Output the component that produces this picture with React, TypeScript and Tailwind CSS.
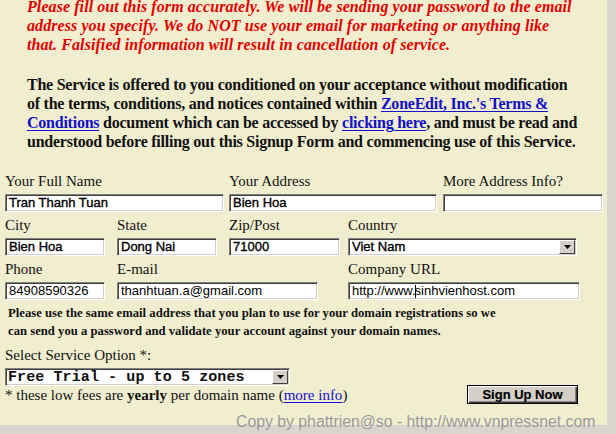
import React from "react";

// classic sunken field border (win9x style)
const sunken =
  "border border-t-[#808080] border-l-[#808080] border-b-white border-r-white shadow-[inset_1px_1px_0_#404040,inset_-1px_-1px_0_#d4d0c8] bg-white";

const serif = "font-['Liberation_Serif','Times_New_Roman',serif]";
const sans = "font-['Liberation_Sans',Arial,sans-serif]";

interface FieldProps {
  w: string;
  value?: string;
  heavy?: boolean;
  caretAt?: number;
}

const Field = ({ w, value = "", heavy, caretAt }: FieldProps) => {
  const text =
    caretAt !== undefined ? (
      <>
        {value.slice(0, caretAt)}
        <span className="inline-block w-px h-[13px] bg-black align-middle -mx-px" />
        {value.slice(caretAt)}
      </>
    ) : (
      value
    );
  return (
    <div
      className={`${w} h-[18px] ${sunken} ${sans} text-[13px] leading-[16px] text-black pl-[3px] whitespace-nowrap overflow-hidden ${
        heavy ? "[-webkit-text-stroke:0.35px_black]" : ""
      }`}
    >
      {text}
    </div>
  );
};

const DropArrow = () => (
  <div className="w-[16px] h-[14px] mt-px mr-px bg-[#d4d0c8] border border-t-white border-l-white border-b-[#404040] border-r-[#404040] flex items-center justify-center">
    <svg width="7" height="4" viewBox="0 0 7 4">
      <path d="M0 0h7L3.5 4z" fill="#000" />
    </svg>
  </div>
);

interface SelectProps {
  w: string;
  value: string;
  mono?: boolean;
}

const Select = ({ w, value, mono }: SelectProps) => (
  <div className={`${w} h-[18px] ${sunken} flex items-start justify-between`}>
    <span
      className={
        mono
          ? "font-['Liberation_Mono','Courier_New',monospace] font-bold text-[15px] leading-[17px] tracking-[0.1px] pl-[2px] whitespace-pre text-[#111]"
          : `${sans} text-[13px] leading-[16px] pl-[3px] [-webkit-text-stroke:0.35px_black]`
      }
    >
      {value}
    </span>
    <DropArrow />
  </div>
);

const Label = ({ children }: { children: React.ReactNode }) => (
  <div className={`${serif} text-[15px] leading-[19px] text-[#111] mb-[3px] whitespace-nowrap`}>{children}</div>
);

const Link = ({ children }: { children: React.ReactNode }) => (
  <span className="text-[#1010c8] underline underline-offset-2">{children}</span>
);

export default function App() {
  return (
    <div className="relative w-[616px] h-[434px] bg-[#d8d5cf] overflow-hidden">
      <div className="w-[607px] h-[428px] bg-[#f0eecf]">
        {/* warning */}
        <p
          className={`${serif} pl-[27px] -mt-[3px] text-[16px] leading-[19px] tracking-[0.08px] font-bold italic text-[#e40000] whitespace-nowrap`}
        >
          Please fill out this form accurately. We will be sending your password to the email
          <br />
          address you specify. We do NOT use your email for marketing or anything like
          <br />
          that. Falsified information will result in cancellation of service.
        </p>

        {/* terms */}
        <p
          className={`${serif} pl-[27px] mt-[21px] text-[16px] leading-[19px] tracking-[-0.24px] font-bold text-[#111] whitespace-nowrap`}
        >
          The Service is offered to you conditioned on your acceptance without modification
          <br />
          of the terms, conditions, and notices contained within <Link>ZoneEdit, Inc.'s Terms &amp;</Link>
          <br />
          <Link>Conditions</Link> document which can be accessed by <Link>clicking here</Link>, and must be read and
          <br />
          understood before filling out this Signup Form and commencing use of this Service.
        </p>

        {/* form */}
        <div className="pl-[5px] mt-[21px]">
          <div className="flex">
            <div className="w-[224px]">
              <Label>Your Full Name</Label>
              <Field w="w-[219px]" value="Tran Thanh Tuan" heavy />
            </div>
            <div className="w-[214px]">
              <Label>Your Address</Label>
              <Field w="w-[208px]" value="Bien Hoa" heavy />
            </div>
            <div>
              <Label>More Address Info?</Label>
              <Field w="w-[160px]" />
            </div>
          </div>

          <div className="flex mt-[4px]">
            <div className="w-[112px]">
              <Label>City</Label>
              <Field w="w-[100px]" value="Bien Hoa" heavy />
            </div>
            <div className="w-[112px]">
              <Label>State</Label>
              <Field w="w-[100px]" value="Dong Nai" heavy />
            </div>
            <div className="w-[119px]">
              <Label>Zip/Post</Label>
              <Field w="w-[111px]" value="71000" heavy />
            </div>
            <div>
              <Label>Country</Label>
              <Select w="w-[229px]" value="Viet Nam" />
            </div>
          </div>

          <div className="flex mt-[4px]">
            <div className="w-[112px]">
              <Label>Phone</Label>
              <Field w="w-[100px]" value="84908590326" />
            </div>
            <div className="w-[231px]">
              <Label>E-mail</Label>
              <Field w="w-[201px]" value="thanhtuan.a@gmail.com" />
            </div>
            <div>
              <Label>Company URL</Label>
              <Field w="w-[232px]" value="http://www.sinhvienhost.com" caretAt={11} />
            </div>
          </div>

          <p className={`${serif} pl-[3px] mt-[4px] text-[12.7px] leading-[18px] font-bold text-[#111] whitespace-nowrap`}>
            Please use the same email address that you plan to use for your domain registrations so we
            <br />
            can send you a password and validate your account against your domain names.
          </p>

          <div className="mt-[6px]">
            <Label>Select Service Option *:</Label>
            <Select w="w-[285px]" value="Free Trial - up to 5 zones" mono />
          </div>

          <div className="flex items-start">
            <span className={`${serif} text-[15px] leading-[19px] text-[#111] whitespace-nowrap`}>
              * these low fees are <b>yearly</b> per domain name (<Link>more info</Link>)
            </span>
            <button
              className={`ml-auto mr-[29px] -mt-px w-[111px] h-[19px] bg-[#d4d0c8] border border-black shadow-[inset_1px_1px_0_#fff,inset_-1px_-1px_0_#404040,inset_-2px_-2px_0_#808080] ${sans} font-bold text-[13px] leading-[15px] text-black [-webkit-text-stroke:0.2px_black]`}
            >
              Sign Up Now
            </button>
          </div>
        </div>
      </div>

      {/* watermark */}
      <div
        className={`absolute left-[236px] top-[413px] ${sans} text-[15.8px] leading-[18px] text-[#9a9a9a] whitespace-nowrap`}
      >
        Copy by phattrien@so - http://www.vnpressnet.com
      </div>
    </div>
  );
}
